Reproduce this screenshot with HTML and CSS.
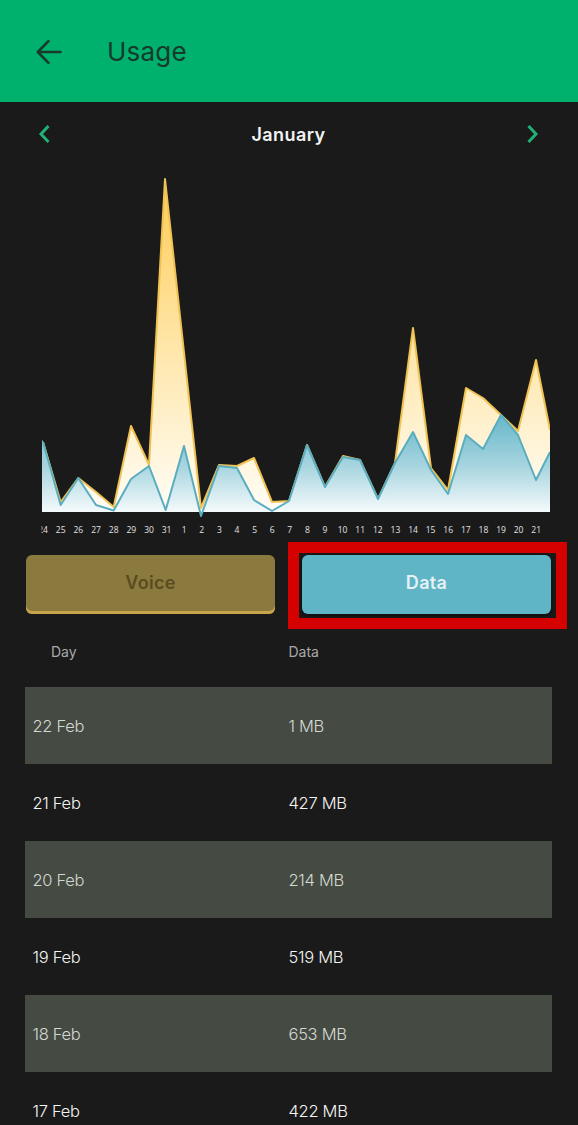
FILE: index.html
```html
<!DOCTYPE html>
<html lang="en">
<head>
<meta charset="utf-8">
<title>Usage</title>
<link rel="stylesheet" href="styles.css">
</head>
<body>
<div class="page">
  <header class="topbar">
    <svg class="back" width="28" height="28" viewBox="0 0 28 28" aria-hidden="true">
      <path d="M26.5 14 H4 M14.5 3.2 L3.8 14 L14.5 24.8" fill="none" stroke="#183a29" stroke-width="2.6" stroke-linecap="round" stroke-linejoin="round"/>
    </svg>
    <h1 class="title">Usage</h1>
  </header>

  <div class="month">
    <svg class="chev" width="16" height="20" viewBox="0 0 16 20" aria-hidden="true">
      <path d="M12.5 2 L5 10 L12.5 18" fill="none" stroke="#1fb175" stroke-width="3"/>
    </svg>
    <span class="month-name">January</span>
    <svg class="chev" width="16" height="20" viewBox="0 0 16 20" aria-hidden="true">
      <path d="M3.5 2 L11 10 L3.5 18" fill="none" stroke="#1fb175" stroke-width="3"/>
    </svg>
  </div>

  <svg class="chart" width="578" height="379" viewBox="0 166 578 379" aria-hidden="true">
    <defs>
      <linearGradient id="gy" gradientUnits="userSpaceOnUse" x1="0" y1="179" x2="0" y2="512">
        <stop offset="0" stop-color="#ffcc55"/>
        <stop offset="0.45" stop-color="#ffe3a0"/>
        <stop offset="0.8" stop-color="#fff4d8"/>
        <stop offset="1" stop-color="#fffdf6"/>
      </linearGradient>
      <linearGradient id="gb" gradientUnits="userSpaceOnUse" x1="0" y1="412" x2="0" y2="514">
        <stop offset="0" stop-color="#62b5c8"/>
        <stop offset="0.55" stop-color="#aad6e0"/>
        <stop offset="1" stop-color="#f8fcfd"/>
      </linearGradient>
      <clipPath id="plot"><rect x="42" y="166" width="508" height="352"/></clipPath>
      <clipPath id="axis"><rect x="41.5" y="515" width="520" height="30"/></clipPath>
    </defs>
    <g clip-path="url(#plot)">
      <polygon fill="url(#gy)" points="42,512 42,440 43,442 60.7,502 78.3,478 96,492 113.7,507 131,426 149,465 165,179 201,508 219,465 237,466 254,458 272,502 289,501 307,445 325,487 343,456 360,460 378,499 395,463 413,328 431,468 448,490 466,388 483,398 501,415 518,431 536,360 550,430 550,512"/>
      <polyline fill="none" stroke="#f0c253" stroke-width="2" stroke-linejoin="round" points="43,442 60.7,502 78.3,478 96,492 113.7,507 131,426 149,465 165,179 201,508 219,465 237,466 254,458 272,502 289,501 307,445 325,487 343,456 360,460 378,499 395,463 413,328 431,468 448,490 466,388 483,398 501,415 518,431 536,360 550,430"/>
      <polygon fill="url(#gb)" points="42,512 42,440 43,442 60.7,505 78.3,478 96,505 113.7,510.5 131,479 149,466 165.7,510 184,446 201,516 219,466 237,468 254,500 272,511 289,501 307,445 325,487 343,457 360,460 378,499 395,463 413,432 431,470 448,494 466,435 483,449 501,415 518,435 536,480 550,452 550,512"/>
      <polyline fill="none" stroke="#5aadbf" stroke-width="2" stroke-linejoin="round" points="43,442 60.7,505 78.3,478 96,505 113.7,510.5 131,479 149,466 165.7,510 184,446 201,516 219,466 237,468 254,500 272,511 289,501 307,445 325,487 343,457 360,460 378,499 395,463 413,432 431,470 448,494 466,435 483,449 501,415 518,435 536,480 550,452"/>
    </g>
    <g class="ticks" clip-path="url(#axis)">
      <text x="43" y="533">24</text>
      <text x="60.7" y="533">25</text>
      <text x="78.3" y="533">26</text>
      <text x="96" y="533">27</text>
      <text x="113.7" y="533">28</text>
      <text x="131.3" y="533">29</text>
      <text x="149" y="533">30</text>
      <text x="166.6" y="533">31</text>
      <text x="184.2" y="533">1</text>
      <text x="201.8" y="533">2</text>
      <text x="219.4" y="533">3</text>
      <text x="237" y="533">4</text>
      <text x="254.6" y="533">5</text>
      <text x="272.2" y="533">6</text>
      <text x="289.8" y="533">7</text>
      <text x="307.4" y="533">8</text>
      <text x="325" y="533">9</text>
      <text x="342.6" y="533">10</text>
      <text x="360.2" y="533">11</text>
      <text x="377.8" y="533">12</text>
      <text x="395.4" y="533">13</text>
      <text x="413" y="533">14</text>
      <text x="430.6" y="533">15</text>
      <text x="448.2" y="533">16</text>
      <text x="465.8" y="533">17</text>
      <text x="483.4" y="533">18</text>
      <text x="501" y="533">19</text>
      <text x="518.6" y="533">20</text>
      <text x="536.2" y="533">21</text>
    </g>
  </svg>

  <div class="toggles">
    <button class="tbtn voice">Voice</button>
    <div class="data-wrap">
      <button class="tbtn data">Data</button>
    </div>
  </div>

  <div class="table">
    <div class="row head"><span class="c1">Day</span><span class="c2">Data</span></div>
    <div class="row alt"><span class="c1">22 Feb</span><span class="c2">1 MB</span></div>
    <div class="row"><span class="c1">21 Feb</span><span class="c2">427 MB</span></div>
    <div class="row alt"><span class="c1">20 Feb</span><span class="c2">214 MB</span></div>
    <div class="row"><span class="c1">19 Feb</span><span class="c2">519 MB</span></div>
    <div class="row alt"><span class="c1">18 Feb</span><span class="c2">653 MB</span></div>
    <div class="row"><span class="c1">17 Feb</span><span class="c2">422 MB</span></div>
  </div>
</div>
</body>
</html>
```

FILE: styles.css
```css
* { box-sizing: border-box; }
html, body {
  margin: 0;
  padding: 0;
  background: #1a1a1a;
  font-family: Inter, "Liberation Sans", sans-serif;
}
.page {
  width: 578px;
  height: 1125px;
  overflow: hidden;
  background: #1a1a1a;
}
.topbar {
  height: 102px;
  background: #00b16e;
  display: flex;
  align-items: center;
  padding-left: 34px;
  padding-top: 1px;
}
.back { display: block; flex: none; }
.title {
  margin: 0 0 0 45px;
  font-size: 26px;
  font-weight: 400;
  color: #183a29;
  letter-spacing: 0.2px;
}
.month {
  height: 64px;
  display: flex;
  align-items: center;
  justify-content: space-between;
  padding: 0 37px 0 36px;
}
.chev { display: block; }
.month-name {
  color: #f2f2f2;
  font-size: 18px;
  font-weight: 600;
  letter-spacing: 0.4px;
}
.chart { display: block; }
.ticks text {
  font-family: "Open Sans", Inter, sans-serif;
  font-size: 8.5px;
  fill: #e2e2e2;
  text-anchor: middle;
}
.toggles {
  display: flex;
  gap: 27px;
  padding: 0 26px 0 26px;
  margin-top: 10px;
}
.tbtn {
  display: block;
  width: 249px;
  height: 59px;
  border: 0;
  border-radius: 6px;
  font-family: Inter, "Liberation Sans", sans-serif;
  font-size: 18px;
  font-weight: 600;
  letter-spacing: 0.3px;
  padding: 0 0 4px 0;
}
.voice {
  background: #8b7a3d;
  color: #5b4b22;
  box-shadow: inset 0 -3px 0 #c9a44c;
}
.data-wrap { position: relative; }
.data {
  background: #5fb4c6;
  color: #e4f2f5;
  box-shadow: 0 1px 5px rgba(0, 0, 0, 0.7);
}
.data-wrap::after {
  content: "";
  position: absolute;
  left: -14px;
  right: -16px;
  top: -13px;
  bottom: -15px;
  border: 11px solid #d50000;
  pointer-events: none;
}
.table {
  margin: 0 26px 0 25px;
}
.row {
  display: grid;
  grid-template-columns: 263.5px 1fr;
  align-items: center;
  height: 77px;
  font-size: 16.5px;
  font-weight: 300;
  color: #f4f4f4;
  letter-spacing: -0.3px;
}
.row .c1 { padding-left: 7.5px; }
.row.alt {
  background: #454a43;
  color: #d3d8d1;
}
.row.head {
  height: 73px;
  padding-top: 1px;
  font-size: 14px;
  font-weight: 400;
  color: #a9a9a9;
  letter-spacing: 0;
}
.row.head .c1 { padding-left: 26px; }
```
